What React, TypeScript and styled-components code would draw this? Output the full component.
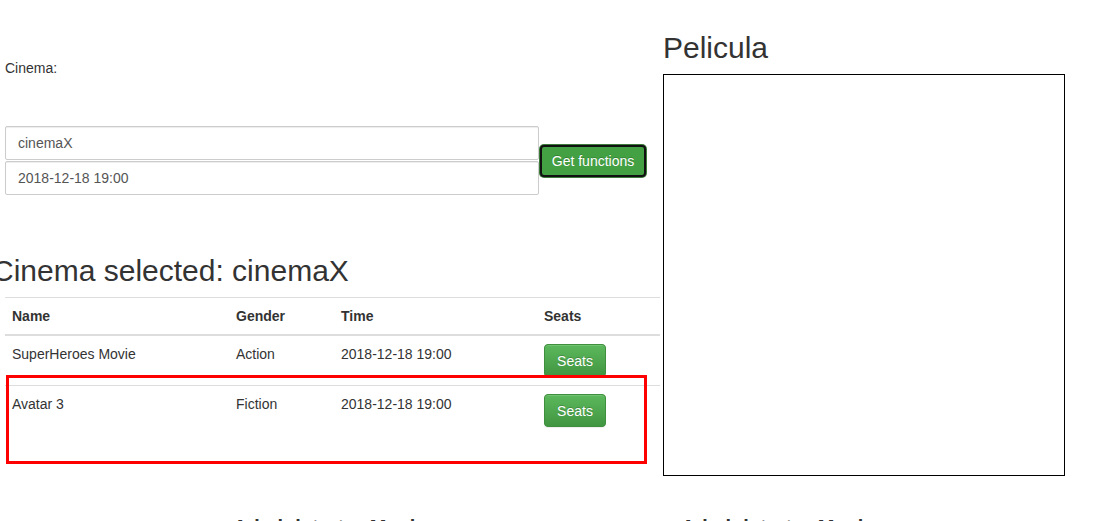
import React from "react";
import styled, { createGlobalStyle } from "styled-components";

const Global = createGlobalStyle`
  html, body { margin: 0; padding: 0; background: #fff; }
  body {
    font-family: "Liberation Sans", Arial, sans-serif;
    font-size: 14px;
    line-height: 20px;
    color: #333;
  }
  * { box-sizing: border-box; }
`;

const Page = styled.div`
  position: relative;
  width: 1116px;
  height: 521px;
  overflow: hidden;
`;

const MainRow = styled.div`
  display: flex;
  align-items: flex-start;
  gap: 3px;
`;

const LeftCol = styled.div`
  width: 655px;
  margin-left: 5px;
  padding-top: 58px;
`;

const RightCol = styled.div`
  width: 402px;
  padding-top: 31px;
`;

const Label = styled.div`
  height: 20px;
`;

const FormRow = styled.div`
  display: flex;
  align-items: center;
  margin-top: 48px;
`;

const Inputs = styled.div`
  display: flex;
  flex-direction: column;
  width: 534px;
  gap: 1px;
`;

const Input = styled.div`
  height: 34px;
  padding: 6px 12px;
  border: 1px solid #ccc;
  border-radius: 2px;
  color: #555;
  background: #fff;
  box-shadow: inset 0 1px 1px rgba(0, 0, 0, 0.075);
`;

const SeatsButton = styled.button`
  display: inline-flex;
  align-items: center;
  justify-content: center;
  height: 33px;
  width: 62px;
  padding: 0;
  font-family: "Liberation Sans", Arial, sans-serif;
  font-size: 14px;
  color: #fff;
  border-radius: 4px;
  cursor: pointer;
  text-shadow: 0 -1px 0 rgba(0, 0, 0, 0.2);
  background-color: #5cb85c;
  background-image: linear-gradient(to bottom, #5cb85c 0%, #419641 100%);
  border: 1px solid #3e8f3e;
  box-shadow: inset 0 1px 0 rgba(255, 255, 255, 0.15), 0 1px 1px rgba(0, 0, 0, 0.075);
`;

const FocusedButton = styled.button`
  display: inline-flex;
  align-items: center;
  justify-content: center;
  width: 106px;
  height: 32px;
  margin-left: 1px;
  padding: 0;
  font-family: "Liberation Sans", Arial, sans-serif;
  font-size: 14px;
  color: #fff;
  border-radius: 4px;
  cursor: pointer;
  text-shadow: 0 -1px 0 rgba(0, 0, 0, 0.2);
  background: #43a043;
  border: 2px solid #111;
  box-shadow: 0 0 0 1px #3b7a3b;
`;

const Heading = styled.h2<{ $shift?: number }>`
  font-family: "Liberation Sans", Arial, sans-serif;
  font-weight: 400;
  font-size: 30px;
  line-height: 33px;
  margin: 0 0 10px ${(p) => p.$shift ?? 0}px;
  color: #333;
  white-space: nowrap;
`;

const SelectedHeading = styled(Heading)`
  margin-top: 59px;
`;

const Table = styled.table`
  width: 655px;
  border-collapse: collapse;
  border-spacing: 0;
`;

const Th = styled.th<{ $w?: number }>`
  text-align: left;
  font-weight: 700;
  padding: 8px 8px 8px 7px;
  vertical-align: bottom;
  border-top: 1px solid #ddd;
  border-bottom: 2px solid #ddd;
  width: ${(p) => (p.$w ? `${p.$w}px` : "auto")};
`;

const Td = styled.td`
  padding: 8px 8px 8px 7px;
  vertical-align: top;
  border-top: 1px solid #ddd;
  line-height: 20px;
`;

const Frame = styled.div`
  width: 402px;
  height: 402px;
  border: 1px solid #000;
`;

const BottomRow = styled.div`
  display: flex;
  margin-top: 40px;
  padding-left: 233px;
`;

const SubHeading = styled.h3<{ $w: number }>`
  font-family: "Liberation Sans", Arial, sans-serif;
  font-weight: 700;
  font-size: 20px;
  line-height: 22px;
  margin: 0;
  width: ${(p) => p.$w}px;
  white-space: nowrap;
`;

const Highlight = styled.div`
  position: absolute;
  left: 6px;
  top: 375px;
  width: 641px;
  height: 89px;
  border: 3px solid #f00;
  pointer-events: none;
`;

const rows = [
  { name: "SuperHeroes Movie", gender: "Action", time: "2018-12-18 19:00" },
  { name: "Avatar 3", gender: "Fiction", time: "2018-12-18 19:00" },
];

export default function App() {
  return (
    <Page>
      <Global />
      <MainRow>
        <LeftCol>
          <Label>Cinema:</Label>
          <FormRow>
            <Inputs>
              <Input>cinemaX</Input>
              <Input>2018-12-18 19:00</Input>
            </Inputs>
            <FocusedButton>Get functions</FocusedButton>
          </FormRow>
          <SelectedHeading $shift={-13}>Cinema selected: cinemaX</SelectedHeading>
          <Table>
            <thead>
              <tr>
                <Th $w={224}>Name</Th>
                <Th $w={105}>Gender</Th>
                <Th $w={203}>Time</Th>
                <Th>Seats</Th>
              </tr>
            </thead>
            <tbody>
              {rows.map((r) => (
                <tr key={r.name}>
                  <Td>{r.name}</Td>
                  <Td>{r.gender}</Td>
                  <Td>{r.time}</Td>
                  <Td>
                    <SeatsButton>Seats</SeatsButton>
                  </Td>
                </tr>
              ))}
            </tbody>
          </Table>
        </LeftCol>
        <RightCol>
          <Heading>Pelicula</Heading>
          <Frame />
        </RightCol>
      </MainRow>
      <BottomRow>
        <SubHeading $w={448}>Administrator Movies</SubHeading>
        <SubHeading $w={400}>Administrator Movies</SubHeading>
      </BottomRow>
      <Highlight />
    </Page>
  );
}
